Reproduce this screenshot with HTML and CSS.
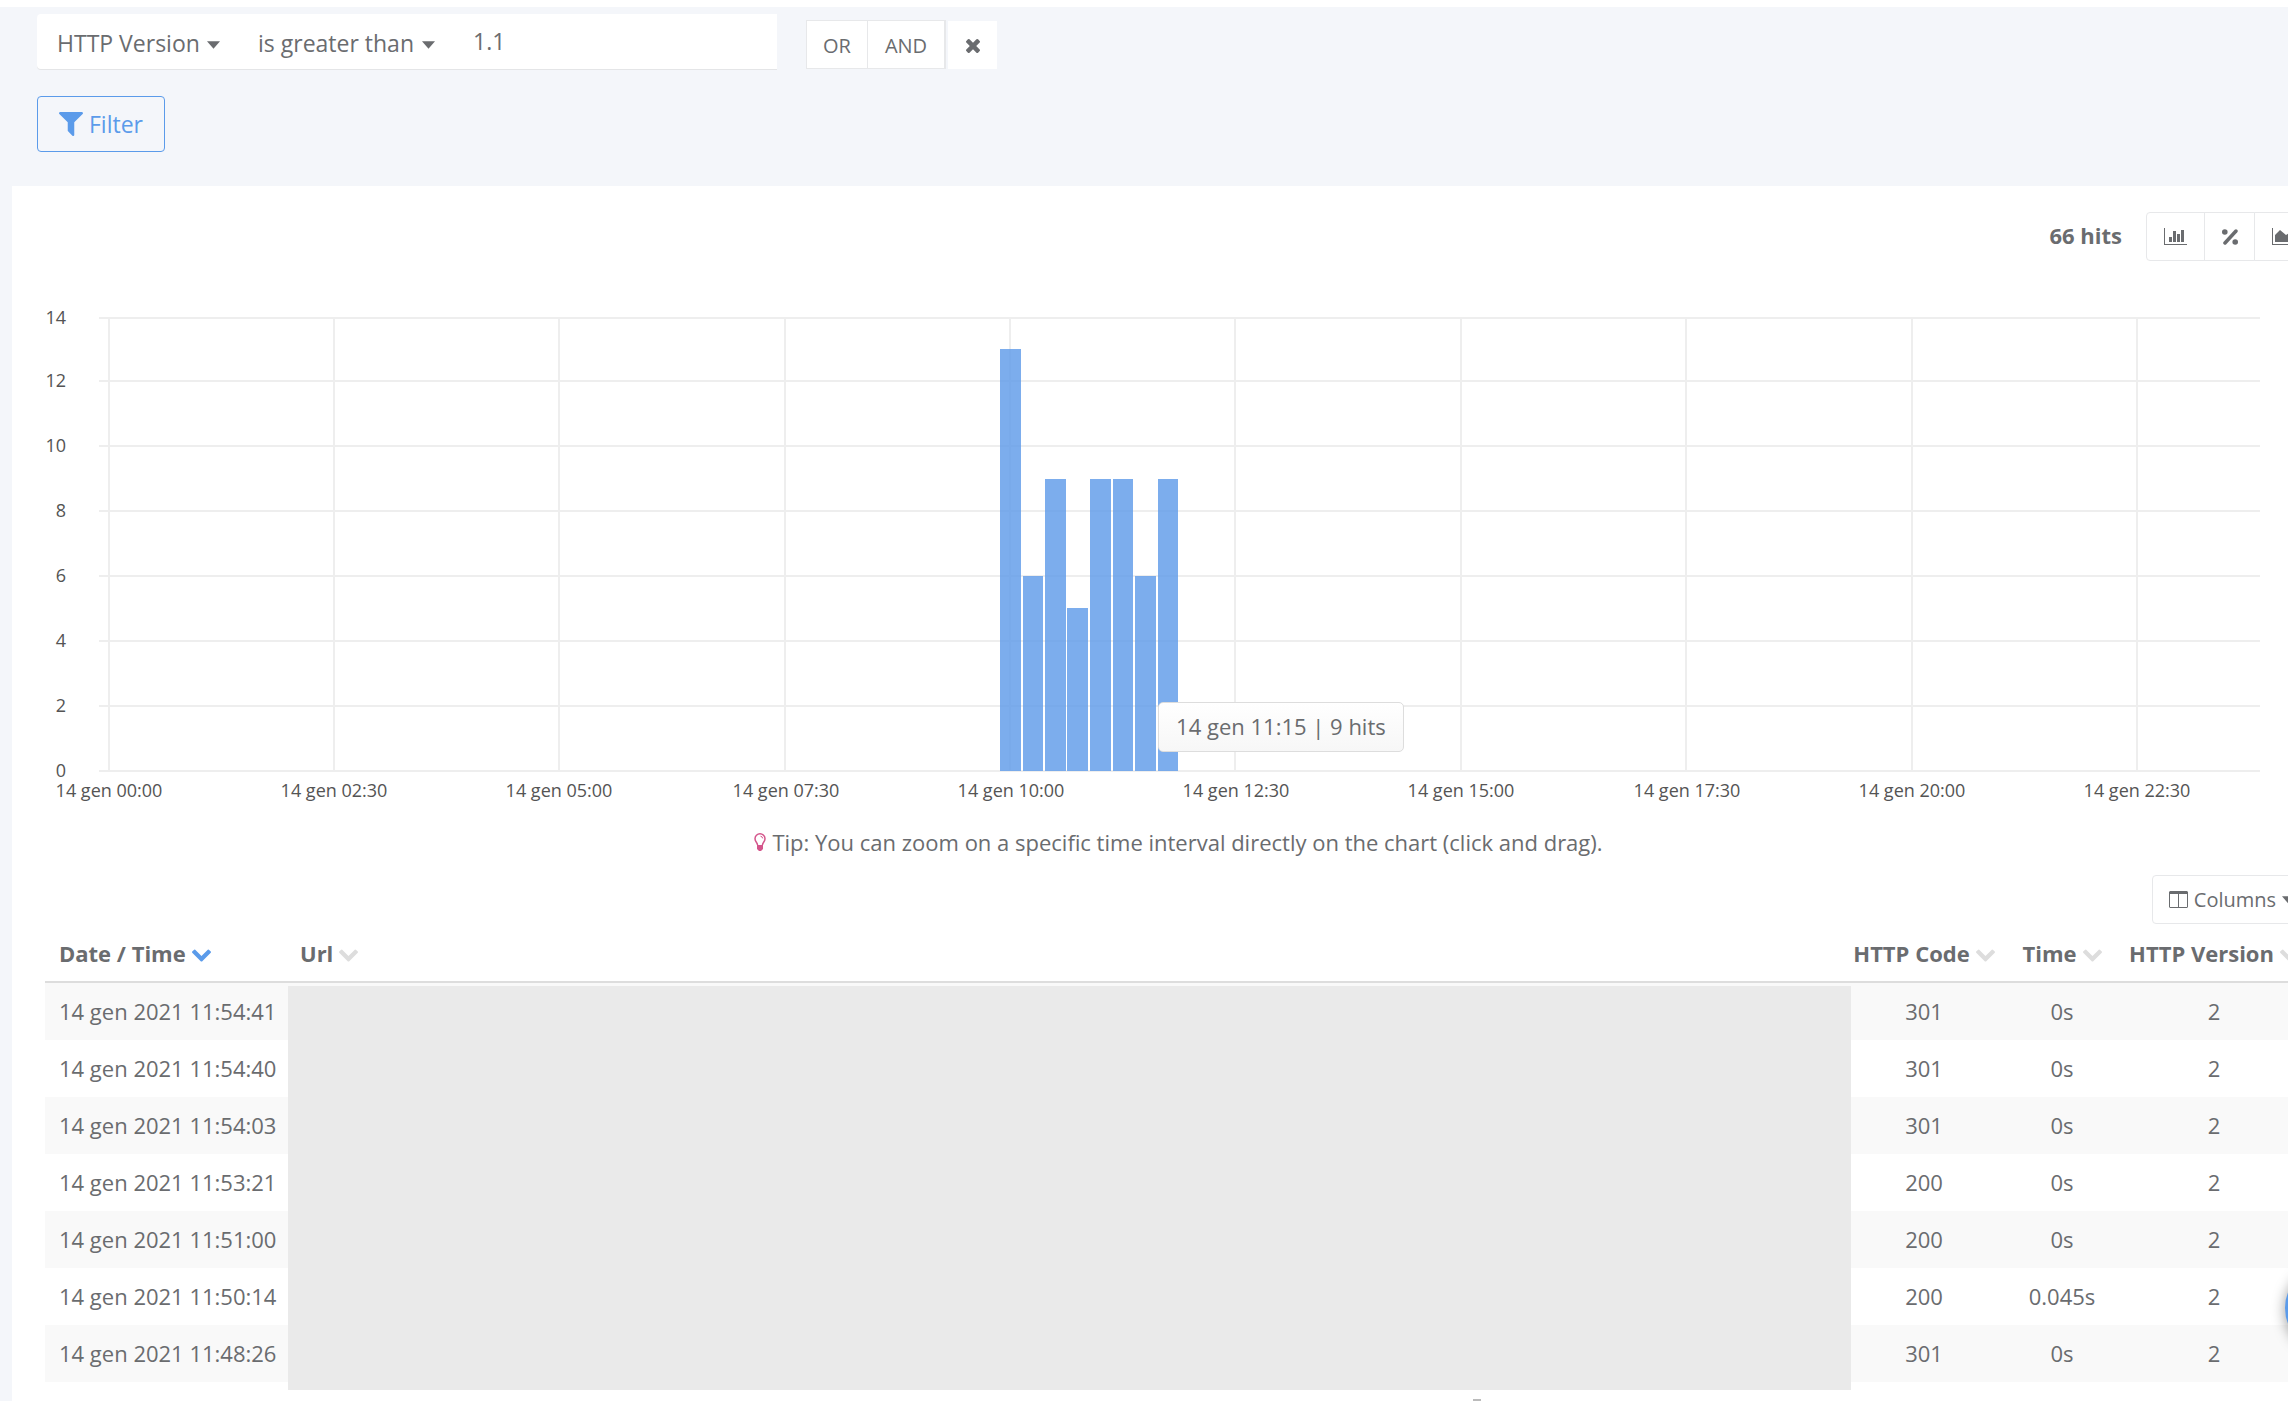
FILE: index.html
```html
<!DOCTYPE html>
<html lang="en">
<head>
<meta charset="utf-8">
<title>HTTP logs</title>
<link rel="stylesheet" href="styles.css">
</head>
<body>
<svg class="defs" aria-hidden="true">
  <symbol id="chevron" viewBox="90 530 1612 1040"><path d="M1683 808l-742 741q-19 19-45 19t-45-19l-742-741q-19-19-19-45.500t19-45.500l166-165q19-19 45-19t45 19l531 531 531-531q19-19 45-19t45 19l166 165q19 19 19 45.500t-19 45.500z"/></symbol>
  <symbol id="caret" viewBox="0 0 14 8"><path d="M0 0h14l-7 8z"/></symbol>
</svg>
<main class="page">
  <form class="filters">
    <div class="condition-row">
      <div class="condition">
        <label class="pick field"><select aria-label="Field"><option>HTTP Version</option></select><svg class="caret"><use href="#caret"/></svg></label>
        <label class="pick operator"><select aria-label="Operator"><option>is greater than</option></select><svg class="caret"><use href="#caret"/></svg></label>
        <input class="value" type="text" value="1.1" aria-label="Value">
      </div>
      <div class="logic">
        <button type="button" class="or">OR</button><button type="button" class="and">AND</button>
      </div>
      <button type="button" class="remove" aria-label="Remove condition"><svg viewBox="302 366 1188 1188"><path d="M1490 1322q0 40-28 68l-136 136q-28 28-68 28t-68-28l-294-294-294 294q-28 28-68 28t-68-28l-136-136q-28-28-28-68t28-68l294-294-294-294q-28-28-28-68t28-68l136-136q28-28 68-28t68 28l294 294 294-294q28-28 68-28t68 28l136 136q28 28 28 68t-28 68l-294 294 294 294q28 28 28 68z"/></svg></button>
    </div>
    <button type="button" class="apply"><svg viewBox="190 256 1412 1408"><path d="M1595 295q17 41-14 70l-493 493v742q0 42-39 59-13 5-25 5-27 0-45-19l-256-256q-19-19-19-45v-486l-493-493q-31-29-14-70 17-39 59-39h1280q42 0 59 39z"/></svg>Filter</button>
  </form>

  <section class="panel">
    <div class="toolbar">
      <strong>66 hits</strong>
      <div class="modes">
        <button type="button" aria-label="Hits"><svg width="23" height="17" viewBox="0 0 23 17"><path d="M0 0h1v16h22v1H0zM5 9h3v5H5zM9 3h3v11H9zM13 6h3v8h-3zM17 2h3v12h-3z"/></svg></button>
        <button type="button" aria-label="Percentage"><svg width="16" height="16" viewBox="0 0 16 16"><path d="M3 14L14 2" fill="none" stroke="#6a6c6f" stroke-width="3.500" stroke-linecap="round"/><circle cx="2.800" cy="3" r="2.800"/><circle cx="13.200" cy="13" r="2.800"/></svg></button>
        <button type="button" aria-label="Area"><svg width="23" height="17" viewBox="0 0 23 17"><path d="M0 0h1v16h22v1H0zM3 14V7l5-5 6 5 3-2 4 5v4z"/></svg></button>
      </div>
    </div>

    <div class="chart">
      <svg viewBox="0 0 2267 520" role="img" aria-label="Hits per 15 minutes">
        <g class="grid">
          <path d="M54 37H2215M54 100H2215M54 165H2215M54 230H2215M54 295H2215M54 360H2215M54 425H2215M54 490H2215"/>
          <path d="M64 37V490M289 37V490M514 37V490M740 37V490M965 37V490M1190 37V490M1416 37V490M1641 37V490M1867 37V490M2092 37V490"/>
        </g>
        <g class="bars">
          <rect x="955" y="68" width="21" height="422"/>
          <rect x="978" y="295" width="20" height="195"/>
          <rect x="1000" y="198" width="21" height="292"/>
          <rect x="1022" y="327" width="21" height="163"/>
          <rect x="1045" y="198" width="21" height="292"/>
          <rect x="1068" y="198" width="20" height="292"/>
          <rect x="1090" y="295" width="21" height="195"/>
          <rect x="1113" y="198" width="20" height="292"/>
        </g>
        <g class="y-axis">
          <text x="21" y="43">14</text><text x="21" y="106">12</text><text x="21" y="171">10</text><text x="21" y="236">8</text>
          <text x="21" y="301">6</text><text x="21" y="366">4</text><text x="21" y="431">2</text><text x="21" y="496">0</text>
        </g>
        <g class="x-axis">
          <text x="64" y="516">14 gen 00:00</text><text x="289" y="516">14 gen 02:30</text><text x="514" y="516">14 gen 05:00</text><text x="741" y="516">14 gen 07:30</text><text x="966" y="516">14 gen 10:00</text>
          <text x="1191" y="516">14 gen 12:30</text><text x="1416" y="516">14 gen 15:00</text><text x="1642" y="516">14 gen 17:30</text><text x="1867" y="516">14 gen 20:00</text><text x="2092" y="516">14 gen 22:30</text>
        </g>
      </svg>
      <div class="tooltip">14 gen 11:15 | 9 hits</div>
    </div>

    <p class="tip"><svg viewBox="0 0 12 18"><path d="M3.500 12C3.500 9.500 1 9 1 5.800a5 5 0 0 1 10 0C11 9 8.500 9.500 8.500 12" fill="none" stroke="#d4558b" stroke-width="1.500"/><path d="M6.500 3.200q2 .3 2.200 2.200" fill="none" stroke="#d4558b"/><path d="M3 12h6v4l-2 2H5l-2-2z" fill="#d4558b"/></svg>Tip: You can zoom on a specific time interval directly on the chart (click and drag).</p>

    <div class="table-tools">
      <button type="button" class="columns"><svg width="19" height="17" viewBox="0 0 19 17"><path d="M1 0h17l1 1v15l-1 1H1l-1-1V1zM1 3v13h8V3zM10 3v13h8V3z" fill-rule="evenodd"/></svg>Columns<svg class="caret"><use href="#caret"/></svg></button>
    </div>

    <div class="results">
      <table>
        <colgroup><col class="c-date"><col><col class="c-code"><col class="c-time"><col class="c-version"></colgroup>
        <thead><tr>
          <th class="sorted">Date / Time<svg><use href="#chevron"/></svg></th>
          <th>Url<svg><use href="#chevron"/></svg></th>
          <th class="num">HTTP Code<svg><use href="#chevron"/></svg></th>
          <th class="num">Time<svg><use href="#chevron"/></svg></th>
          <th class="num">HTTP Version<svg><use href="#chevron"/></svg></th>
        </tr></thead>
        <tbody>
          <tr><td>14 gen 2021 11:54:41</td><td></td><td class="num">301</td><td class="num">0s</td><td class="num">2</td></tr>
          <tr><td>14 gen 2021 11:54:40</td><td></td><td class="num">301</td><td class="num">0s</td><td class="num">2</td></tr>
          <tr><td>14 gen 2021 11:54:03</td><td></td><td class="num">301</td><td class="num">0s</td><td class="num">2</td></tr>
          <tr><td>14 gen 2021 11:53:21</td><td></td><td class="num">200</td><td class="num">0s</td><td class="num">2</td></tr>
          <tr><td>14 gen 2021 11:51:00</td><td></td><td class="num">200</td><td class="num">0s</td><td class="num">2</td></tr>
          <tr><td>14 gen 2021 11:50:14</td><td></td><td class="num">200</td><td class="num">0.045s</td><td class="num">2</td></tr>
          <tr><td>14 gen 2021 11:48:26</td><td></td><td class="num">301</td><td class="num">0s</td><td class="num">2</td></tr>
        </tbody>
      </table>
      <div class="url-mask"></div>
    </div>
    <div class="more"></div>
  </section>
</main>
<button type="button" class="help" aria-label="Help"></button>
</body>
</html>
```
FILE: styles.css
```css
* { box-sizing: border-box; }
html { height: 100%; overflow: hidden; }
body {
  margin: 0;
  min-height: 100%;
  overflow: hidden;
  background: #f4f6fa;
  border-top: 7px solid #fff;
  color: #6a6c6f;
  font: 22px/30px "Open Sans", "Noto Sans", sans-serif;
}
button, select, input { font: inherit; color: inherit; margin: 0; }
button { display: flex; align-items: center; justify-content: center; background: #fff; padding: 0; }
svg { display: block; flex: none; fill: currentColor; }
.defs { position: absolute; width: 0; height: 0; }
.caret { width: 13px; height: 8px; }

/* filters */
.filters { padding: 7px 37px 34px; }
.condition-row { display: flex; align-items: flex-end; margin-bottom: 27px; }
.condition {
  display: flex;
  align-items: center;
  width: 740px;
  height: 55px;
  padding: 2px 0 0 20px;
  background: #fff;
  border-radius: 4px 0 0 4px;
  box-shadow: 0 1px 0 #e4e5e7;
  font-size: 23px;
}
.pick { display: flex; align-items: center; gap: 7px; }
.pick select { appearance: none; border: 0; padding: 0; background: none; height: 40px; }
.pick .caret { margin-top: 4px; }
.operator { margin-left: 38px; }
.value { flex: 1; min-width: 0; border: 0; padding: 0 0 4px; margin-left: 38px; background: none; height: 44px; }
.logic { display: flex; margin-left: 29px; }
.logic button { height: 49px; padding-top: 2px; border: 1px solid #e7e8ea; font-size: 20px; }
.logic .or { width: 62px; }
.logic .and { width: 79px; margin-left: -1px; border-right-width: 2px; }
.remove { width: 49px; height: 48px; padding-top: 2px; margin-left: 2px; border: 0; }
.remove svg { width: 14px; height: 14px; }
.apply {
  width: 128px;
  height: 56px;
  gap: 6px;
  border: 1px solid #5b9bea;
  border-radius: 4px;
  background: none;
  color: #5b9bea;
  font-size: 23px;
}
.apply svg { width: 24px; height: 24px; }

/* the panel runs on past the right edge of the window */
.panel { margin: 0 -57px 0 12px; padding: 26px 33px 40px; background: #fff; }
.toolbar { display: flex; justify-content: flex-end; align-items: center; gap: 24px; height: 49px; }
.toolbar strong { padding-bottom: 4px; }
.modes { display: flex; }
.modes button { width: 51px; height: 49px; border: 1px solid #e7e8ea; margin-left: -1px; }
.modes button:first-child { width: 59px; border-radius: 4px 0 0 4px; margin-left: 0; }
.modes button:last-child { width: 58px; border-radius: 0 4px 4px 0; }

/* chart */
.chart { position: relative; margin-top: 20px; }
.chart svg { width: 100%; height: auto; }
.grid { stroke: #eee; stroke-width: 2; }
.bars { fill: #5b98e9; fill-opacity: 0.8; }
.chart text { font-size: 18px; fill: #545454; }
.y-axis { text-anchor: end; }
.x-axis { text-anchor: middle; }
.tooltip {
  position: absolute;
  left: 49.1%;
  top: 81%;
  padding: 8px 17px 10px;
  border: 1px solid #ddd;
  border-radius: 5px;
  background: linear-gradient(#fff, #f7f7f7);
  white-space: nowrap;
}
.tip { display: flex; justify-content: center; gap: 6px; margin: 26px 0 18px; align-items: center; }
.tip svg { width: 12px; height: 18px; }

/* table */
.table-tools { display: flex; justify-content: flex-end; }
.columns { height: 49px; width: 160px; gap: 6px; border: 1px solid #e7e8ea; border-radius: 4px; font-size: 20px; }
.results { position: relative; }
table { width: 100%; table-layout: fixed; border-collapse: separate; border-spacing: 0; }
.c-date { width: 241px; }
.c-code { width: 168px; }
.c-time { width: 108px; }
.c-version { width: 196px; }
th, td { padding: 0 14px; text-align: left; height: 57px; white-space: nowrap; }
td, td.num { padding-bottom: 2px; }
th { height: 59px; border-bottom: 2px solid #ddd; }
.num { text-align: center; padding: 0; }
th svg { display: inline-block; width: 19px; height: 13px; margin-left: 6px; color: #ddd; }
.sorted svg { color: #5b9bea; }
tbody tr:nth-child(odd) { background: #f9f9f9; }
.url-mask { position: absolute; left: 243px; right: 461px; top: 62px; bottom: -8px; background: #eaeaea; }
.more { width: 8px; height: 2px; margin: 17px 0 0 63%; background: #bbb; }

.help {
  position: fixed;
  right: -85px;
  bottom: 49px;
  width: 88px;
  height: 88px;
  border: 0;
  border-radius: 50%;
  background: #5b9bea;
  box-shadow: 0 2px 14px rgba(0, 0, 0, 0.4);
}
```
